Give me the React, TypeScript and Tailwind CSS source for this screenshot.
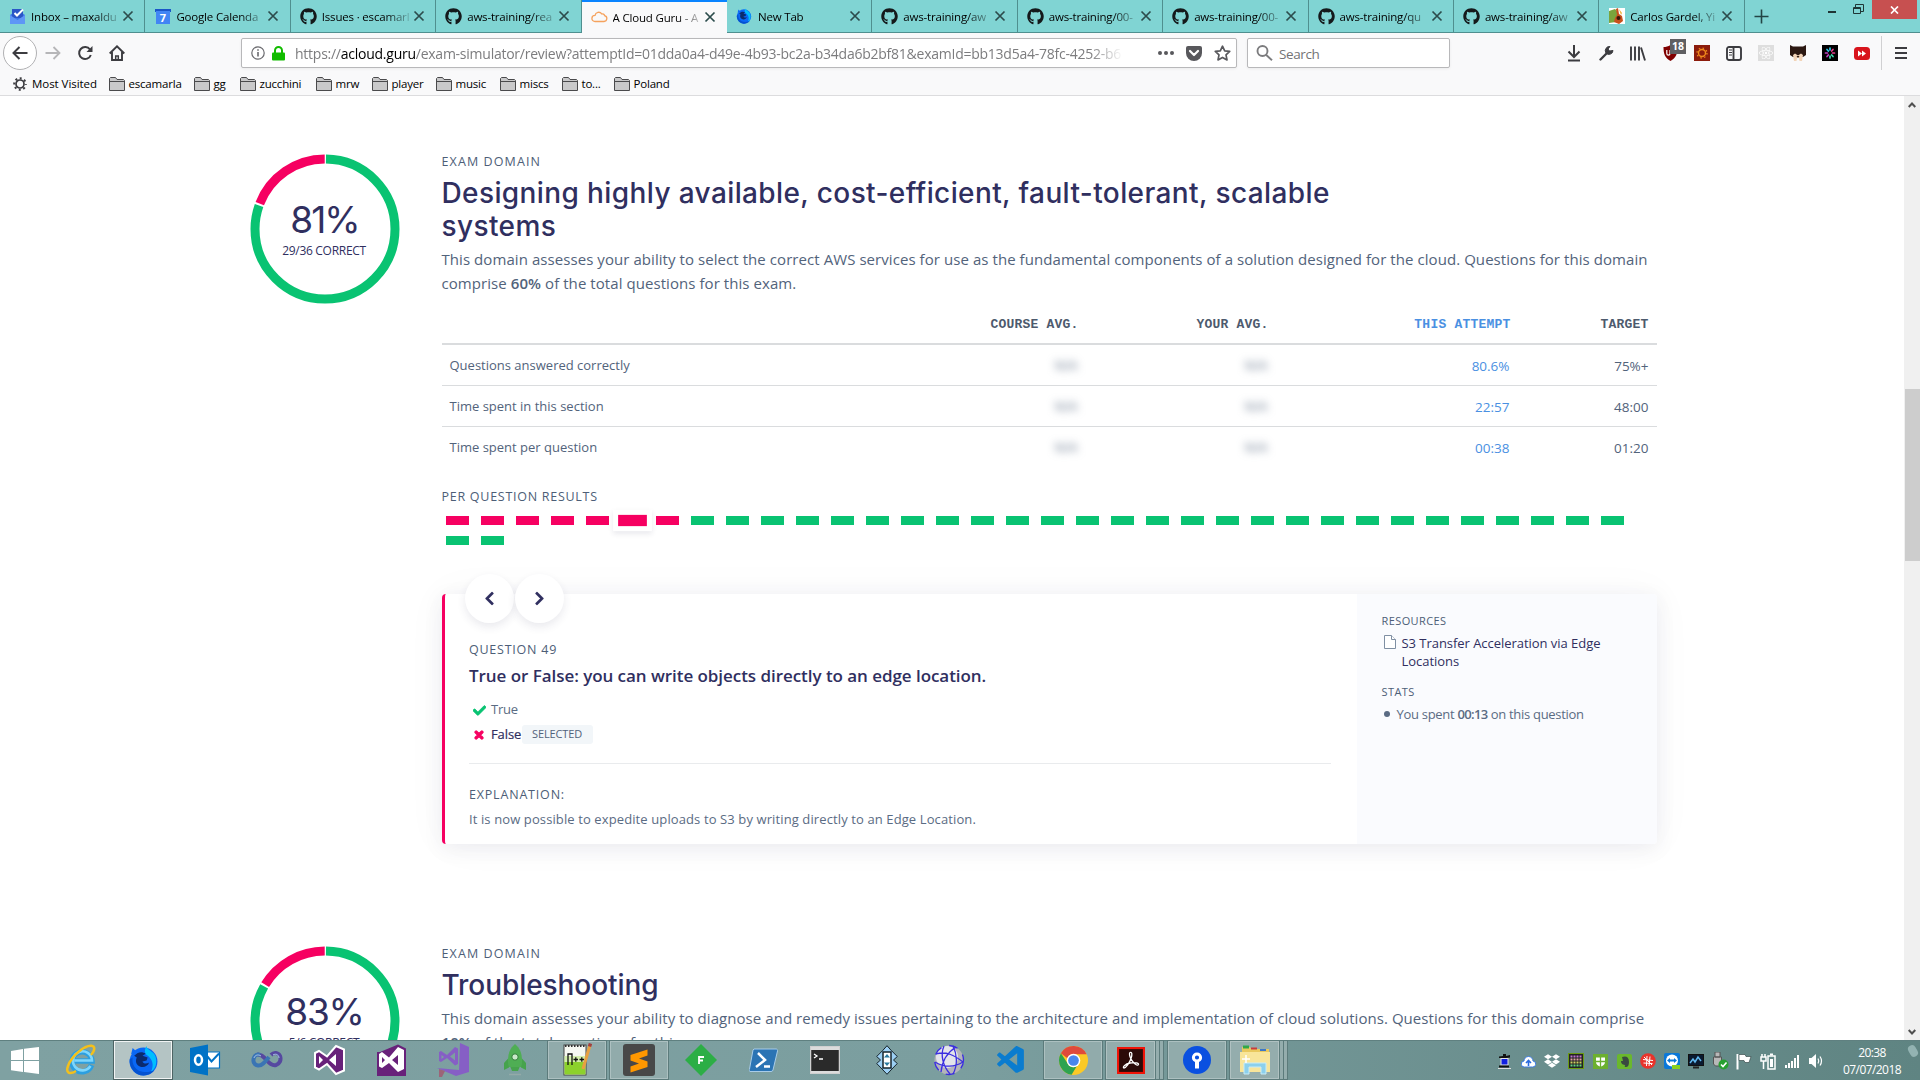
import React from "react";
import { FaGithub, FaDropbox, FaCheck, FaTimes, FaChevronLeft, FaChevronRight, FaReact } from "react-icons/fa";
import { VscVscode } from "react-icons/vsc";

/* ---------- browser chrome icons ---------- */

const InboxIcon = () => (
  <svg width="17" height="17" viewBox="0 0 17 17">
    <path d="M1 7l7.500-5L16 7v9H1z" fill="#3b78e7" />
    <path d="M3 1h11v9H3z" fill="#2a56c6" />
    <path d="M1 7l7.500 5L16 7v9H1z" fill="#5e97f6" />
    <path d="M5.500 5l2.500 2.500L14 1.500" stroke="#fff" strokeWidth="2" fill="none" />
  </svg>
);

const CalendarIcon = () => (
  <svg width="16" height="17" viewBox="0 0 16 17">
    <rect x="0" y="1" width="16" height="3" fill="#1a56c8" />
    <rect x="1" y="3" width="14" height="13" fill="#4285f4" />
    <text x="8" y="13.500" fontSize="11" fontWeight="700" fill="#fff" textAnchor="middle" fontFamily="Open Sans, sans-serif">7</text>
  </svg>
);

const CloudIcon = () => (
  <svg width="17" height="16" viewBox="0 0 17 16" fill="none" stroke="#f5a25d" strokeWidth="1.300">
    <path d="M4 12.500h9a3 3 0 0 0 .6-5.900 2.300 2.300 0 0 0-2.900-1.700A3.700 3.700 0 0 0 4 6.300 3.100 3.100 0 0 0 4 12.500z" />
  </svg>
);

const FirefoxIcon = ({ size }: { size: number }) => (
  <svg width={size} height={size} viewBox="0 0 30 30">
    <circle cx="15" cy="16" r="13.500" fill="#0a68f5" />
    <path d="M18 1c0 4 7 5 8.500 10 2 6 .5 12-4.500 15.500C26 19 23 13 18.500 10 15.500 8 16 4 18 1z" fill="#00bfff" />
    <path d="M3 9L4.500 3l4 3.500L14 5z" fill="#0a68f5" />
    <path d="M9 8c3-1.500 6-1 8 .5l-3 2 5 1.500-1 3-4 1c1 2.500 4 2.500 6.500 1-1.500 4-6 5.500-9.500 3.500-3.500-2-4-5.500-2.500-8.500L6 10.500z" fill="#0b2b6e" />
    <path d="M1.600 14C1 22 7 29.500 15 29.500c4 0 8-1.500 10.500-5C18 28 9 26 6 20.500 4.500 18 4 15 4.500 12z" fill="#0452d0" />
  </svg>
);

const GuitarIcon = () => (
  <svg width="16" height="16" viewBox="0 0 16 16">
    <rect width="16" height="16" fill="#fff" />
    <path d="M0 3l6-2 3 3-2 10-7 1z" fill="#7aa43c" />
    <path d="M7 1l2-1 1 6 3 2 1 5-4 3-5-2 1-4 2-3z" fill="#c8501c" />
    <circle cx="9.500" cy="10" r="2" fill="#3a1808" />
    <path d="M10 1l3 4-1 2z" fill="#f0b030" />
  </svg>
);

const CloseX = () => (
  <svg width="12" height="12" viewBox="0 0 12 12" stroke="#2c4c4c" strokeWidth="1.700">
    <path d="M1.500 1.500l9 9M10.500 1.500l-9 9" />
  </svg>
);

const Github = () => <FaGithub size={17} color="#14191b" />;

type TabData = { label: string; icon: React.ReactNode; active?: boolean };

const tabs: TabData[] = [
  { label: "Inbox – maxaldu", icon: <InboxIcon /> },
  { label: "Google Calenda", icon: <CalendarIcon /> },
  { label: "Issues · escamarl", icon: <Github /> },
  { label: "aws-training/rea", icon: <Github /> },
  { label: "A Cloud Guru - A", icon: <CloudIcon />, active: true },
  { label: "New Tab", icon: <FirefoxIcon size={16} /> },
  { label: "aws-training/aw", icon: <Github /> },
  { label: "aws-training/00-", icon: <Github /> },
  { label: "aws-training/00-", icon: <Github /> },
  { label: "aws-training/qu", icon: <Github /> },
  { label: "aws-training/aw", icon: <Github /> },
  { label: "Carlos Gardel, Yi", icon: <GuitarIcon /> },
];

function TabStrip() {
  return (
    <div className="flex h-[33px] bg-[#80d4d3]">
      {tabs.map((t, i) => (
        <div
          key={i}
          className={
            t.active
              ? "flex w-[145.400px] shrink-0 items-center border-t-2 border-[#0a84ff] bg-[#f9f9fa] pl-[9px] pb-[1px]"
              : "flex w-[145.400px] shrink-0 items-center border-r border-b border-[#4f8f8f] pl-[9px]"
          }
        >
          <span className="flex w-[17px] shrink-0 justify-center">{t.icon}</span>
          <span className="ml-[5px] w-[88px] shrink-0 pt-[1px] text-[11.500px] leading-5 tracking-[-0.180px] whitespace-nowrap text-black [mask-image:linear-gradient(to_right,#000_72%,rgba(0,0,0,0.150)_100%)]">
            {t.label}
          </span>
          <span className="ml-[3px]">
            <CloseX />
          </span>
        </div>
      ))}
      <div className="flex flex-1 items-center border-b border-[#4f8f8f] pl-[9px]">
        <svg width="15" height="15" viewBox="0 0 15 15" stroke="#234545" strokeWidth="1.600">
          <path d="M7.500 0.500v14M0.500 7.500h14" />
        </svg>
      </div>
      <div className="flex items-start border-b border-[#4f8f8f] pr-[3px]">
        <span className="mt-[11px] mr-[17px] h-[2px] w-2 bg-[#1f3535]" />
        <svg className="mt-1 mr-2" width="11" height="11" viewBox="0 0 11 11" fill="none" stroke="#1f3535">
          <path d="M.5 3.500h7v6h-7zM.5 4.500h7M2.500 3V.5h8v7H8" />
        </svg>
        <span className="flex h-[19px] w-[45px] items-center justify-center bg-[#c75050]">
          <svg width="9" height="8" viewBox="0 0 9 8" stroke="#fff" strokeWidth="1.700">
            <path d="M1 .5l7 7M8 .5l-7 7" />
          </svg>
        </span>
      </div>
    </div>
  );
}

const ToolSlot = ({ children }: { children: React.ReactNode }) => (
  <span className="flex h-8 w-8 shrink-0 items-center justify-center">{children}</span>
);

function NavBar() {
  return (
    <div className="flex h-10 items-center pl-[3px]">
      <span className="flex h-[34px] w-[34px] shrink-0 items-center justify-center rounded-full border border-[#b1b1b3] bg-white">
        <svg width="16" height="14" viewBox="0 0 16 14" fill="none" stroke="#3c3c40" strokeWidth="2">
          <path d="M15.500 7H1.500M7.500 1l-6 6 6 6" />
        </svg>
      </span>
      <ToolSlot>
        <svg width="16" height="14" viewBox="0 0 16 14" fill="none" stroke="#b6b6b8" strokeWidth="1.800">
          <path d="M.5 7h14M8.500 1l6 6-6 6" />
        </svg>
      </ToolSlot>
      <ToolSlot>
        <svg width="16" height="16" viewBox="0 0 16 16" fill="none" stroke="#3c3c40" strokeWidth="2">
          <path d="M13.800 10A6 6 0 1 1 13 4.500" />
          <path d="M15.500 1v6H9.500z" fill="#3c3c40" stroke="none" />
        </svg>
      </ToolSlot>
      <ToolSlot>
        <svg width="16" height="16" viewBox="0 0 16 16" fill="none" stroke="#3c3c40" strokeWidth="1.900">
          <path d="M.7 8.500L8 1.300l7.300 7.200M3 7v8h10V7" />
          <path d="M6.700 15v-4h2.600v4" strokeWidth="1.500" />
        </svg>
      </ToolSlot>
      <div className="ml-[108px] flex h-[30px] w-[996px] shrink-0 items-center rounded-[2px] border border-[#b8b8ba] bg-white pl-[9px] shadow-[0_1px_3px_rgba(0,0,0,0.060)]">
        <svg width="14" height="14" viewBox="0 0 14 14" fill="none" stroke="#6a6a6e" strokeWidth="1.200">
          <circle cx="7" cy="7" r="6.200" />
          <path d="M7 6v4.500M7 3.300v1.500" strokeWidth="1.600" />
        </svg>
        <svg className="ml-[7px]" width="13" height="15" viewBox="0 0 13 15">
          <rect x="0" y="6.500" width="13" height="8" rx="1" fill="#12bc00" />
          <path d="M3 8V4.500a3.500 3.500 0 0 1 7 0V8" fill="none" stroke="#12bc00" strokeWidth="2" />
        </svg>
        <span className="ml-[10px] w-[828px] shrink-0 overflow-hidden pt-[1px] text-[14px] leading-7 tracking-[-0.249px] whitespace-nowrap text-[#7c7c7e] [mask-image:linear-gradient(to_right,#000_96%,transparent_100%)]">
          https://<span className="text-black">acloud.guru</span>/exam-simulator/review?attemptId=01dda0a4-d49e-4b93-bc2a-b34da6b2bf81&amp;examId=bb13d5a4-78fc-4252-b6
        </span>
        <svg className="ml-[35px]" width="16" height="4" viewBox="0 0 16 4" fill="#58585c">
          <circle cx="2" cy="2" r="2" />
          <circle cx="8" cy="2" r="2" />
          <circle cx="14" cy="2" r="2" />
        </svg>
        <svg className="ml-[12px]" width="16" height="15" viewBox="0 0 16 15">
          <path d="M2 0h12a2 2 0 0 1 2 2v5a8 8 0 0 1-16 0V2a2 2 0 0 1 2-2z" fill="#58585c" />
          <path d="M4 5l4 4 4-4" fill="none" stroke="#fff" strokeWidth="2.200" strokeLinecap="round" strokeLinejoin="round" />
        </svg>
        <svg className="ml-[12px]" width="17" height="16" viewBox="0 0 17 16" fill="none" stroke="#58585c" strokeWidth="1.700" strokeLinejoin="round">
          <path d="M8.500 1.200l2.200 4.600 5 .6-3.700 3.500 1 5-4.500-2.500L4 14.900l1-5L1.300 6.400l5-.6z" />
        </svg>
      </div>
      <div className="ml-[10px] flex h-[30px] w-[203px] shrink-0 items-center rounded-[2px] border border-[#b8b8ba] bg-white pl-[8px] shadow-[0_1px_3px_rgba(0,0,0,0.060)]">
        <svg width="17" height="16" viewBox="0 0 17 16" fill="none" stroke="#7c7c7e" strokeWidth="1.900">
          <circle cx="6.500" cy="6" r="5" />
          <path d="M10 9.800l6 5.500" />
        </svg>
        <span className="ml-[6px] pt-[1px] text-[13.500px] leading-7 tracking-[-0.400px] text-[#737375]">Search</span>
      </div>
      <div className="ml-[108px] flex shrink-0 items-center">
        <ToolSlot>
          <svg width="14" height="17" viewBox="0 0 14 17" fill="none" stroke="#3c3c40" strokeWidth="2">
            <path d="M7 0v11M1.500 6.500L7 12l5.500-5.500M1 15.500h12" />
          </svg>
        </ToolSlot>
        <ToolSlot>
          <svg width="15" height="15" viewBox="0 0 15 15">
            <path d="M1.500 13.500l7-7" stroke="#3c3c40" strokeWidth="2.400" strokeLinecap="round" />
            <path d="M14 4.500A4 4 0 0 1 7 7 4.200 4.200 0 0 1 11 .5L9 3l1.500 2L14 4.500z" fill="#3c3c40" stroke="#3c3c40" />
          </svg>
        </ToolSlot>
        <ToolSlot>
          <svg width="16" height="15" viewBox="0 0 16 15" stroke="#3c3c40" strokeWidth="1.900">
            <path d="M1 .5v14M5 .5v14M9 .5v14M11 1.500l4 13" />
          </svg>
        </ToolSlot>
        <span className="relative flex h-8 w-8 items-center justify-center">
          <svg className="mr-0" width="15" height="16" viewBox="0 0 15 16">
            <path d="M7.500 0C10 1.500 12 2 14.500 2c0 7-1.500 11-7 14C2 13 .5 9 .5 2 3 2 5 1.500 7.500 0z" fill="#800000" />
            <path d="M3.800 5v3.500a1.500 1.500 0 0 0 3.200 0V5" stroke="#fff" strokeWidth="1.200" fill="none" />
          </svg>
          <span className="absolute top-[2px] left-[16px] flex h-[15px] w-[16px] items-center justify-center bg-[#5f5f62] text-[10.500px] leading-none font-bold text-white">18</span>
        </span>
        <ToolSlot>
          <svg width="16" height="16" viewBox="0 0 16 16">
            <rect width="16" height="16" fill="#8c1c0c" />
            <circle cx="8" cy="8" r="3.500" fill="none" stroke="#f08a1c" strokeWidth="1.400" />
            <circle cx="8" cy="8" r="5" fill="none" stroke="#f08a1c" strokeWidth="1.300" strokeDasharray="1.500 2.427" />
          </svg>
        </ToolSlot>
        <ToolSlot>
          <svg width="16" height="15" viewBox="0 0 16 15" fill="none" stroke="#3c3c40" strokeWidth="1.900">
            <rect x="1" y="1" width="14" height="13" rx="2" />
            <path d="M7.500 1v13" />
            <path d="M3 4h3M3 6.500h3M3 9h3" strokeWidth="1" />
          </svg>
        </ToolSlot>
        <ToolSlot>
          <span className="flex h-4 w-4 items-center justify-center bg-[#dedede]">
            <FaReact size={14} color="#ffffff" />
          </span>
        </ToolSlot>
        <ToolSlot>
          <svg width="16" height="16" viewBox="0 0 16 16">
            <path d="M0 0l3 1.500h10L16 0v10l-3 2H3l-3-2z" fill="#2c1812" />
            <path d="M3 10l2-1.500 3 2 3-2 2 1.500-1 6H9.500l-.5-3H7l-.5 3H4z" fill="#f2d4b8" />
            <path d="M6.500 11h3l-1.500 2z" fill="#2c1812" />
          </svg>
        </ToolSlot>
        <ToolSlot>
          <svg width="16" height="16" viewBox="0 0 16 16">
            <rect width="16" height="16" fill="#000" />
            <g strokeWidth="1.700" strokeLinecap="round">
              <path d="M8 3v2M5 4.500l1.300 1.500" stroke="#30c8e8" />
              <path d="M11 4.500l-1.300 1.500M12.500 8h-2" stroke="#e83e8c" />
              <path d="M11 11.500l-1.300-1.500M8 13v-2" stroke="#40d8b0" />
              <path d="M5 11.500l1.300-1.500M3.500 8h2" stroke="#c040c0" />
            </g>
          </svg>
        </ToolSlot>
        <ToolSlot>
          <svg width="16" height="13" viewBox="0 0 16 13">
            <rect width="16" height="13" rx="3.500" fill="#d8141c" />
            <path d="M4 3.500l4 3-4 3zM8 3.500l4 3-4 3z" fill="#fff" />
          </svg>
        </ToolSlot>
      </div>
      <span className="ml-[3px] h-[34px] w-px bg-[#d0d0d2]" />
      <svg className="ml-[13px]" width="12" height="12" viewBox="0 0 12 12" stroke="#3c3c40" strokeWidth="2">
        <path d="M0 1h12M0 6h12M0 11h12" />
      </svg>
    </div>
  );
}

const bookmarks = [
  { label: "escamarla", cls: "w-[85px]" },
  { label: "gg", cls: "w-[46px]" },
  { label: "zucchini", cls: "w-[76px]" },
  { label: "mrw", cls: "w-[56px]" },
  { label: "player", cls: "w-[64px]" },
  { label: "music", cls: "w-[64px]" },
  { label: "miscs", cls: "w-[62px]" },
  { label: "to...", cls: "w-[52px]" },
  { label: "Poland", cls: "w-[70px]" },
];

const FolderIcon = () => (
  <svg className="shrink-0" width="16" height="14" viewBox="0 0 16 14" stroke="#4a4a4c" fill="#c9c9ca">
    <path d="M.5 13.500v-12l1-1h5l1.500 2h6.500l1 1v10z" />
    <path d="M.5 4.500h15" />
  </svg>
);

function BookmarkBar() {
  return (
    <div className="flex h-[23px] items-center border-b border-[#dcdcde] text-[11.500px] leading-[22px] tracking-[-0.200px] whitespace-nowrap text-black">
      <span className="flex w-[108.500px] items-center pl-[13px]">
        <svg width="14" height="14" viewBox="0 0 14 14" fill="none" stroke="#3c3c40">
          <circle cx="7" cy="7" r="4" strokeWidth="1.700" />
          <circle cx="7" cy="7" r="5.800" strokeWidth="2" strokeDasharray="2 2.555" strokeDashoffset="1" />
        </svg>
        <span className="ml-[5px] tracking-[-0.050px]">Most Visited</span>
      </span>
      {bookmarks.map((b) => (
        <span key={b.label} className={"flex shrink-0 items-center gap-1 " + b.cls}>
          <FolderIcon />
          {b.label}
        </span>
      ))}
    </div>
  );
}

/* ---------- page ---------- */

function Donut({ fraction, percent, detail, pctClass }: { fraction: number; percent: string; detail: string; pctClass: string }) {
  const c = 2 * Math.PI * 70;
  const gap = 2;
  return (
    <div className="relative mt-[2px] h-[150px] w-[150px] shrink-0">
      <svg width="150" height="150" viewBox="0 0 150 150" fill="none" strokeWidth="9">
        <g transform="rotate(-90 75 75)">
          <circle cx="75" cy="75" r="70" stroke="#09c372" strokeDasharray={`${c * fraction - gap} ${c}`} strokeDashoffset={-gap / 2} />
          <circle cx="75" cy="75" r="70" stroke="#f60061" strokeDasharray={`${c * (1 - fraction) - gap} ${c}`} strokeDashoffset={-(c * fraction + gap / 2)} />
        </g>
      </svg>
      <div className="absolute inset-0 flex flex-col items-center pt-[46px] whitespace-nowrap text-[#302f5f]">
        <span className={"font-['Inter'] text-[37px] leading-[40px] " + pctClass}>{percent}</span>
        <span className="mt-[1px] mr-[1px] text-[12px] leading-[20px] tracking-[-0.290px]">{detail}</span>
      </div>
    </div>
  );
}

const Label = ({ children, cls }: { children: React.ReactNode; cls: string }) => (
  <div className={"text-[12.500px] leading-5 font-medium whitespace-nowrap text-[#4d5e77] " + cls}>{children}</div>
);

const rows = [
  ["Questions answered correctly", "80.6%", "75%+"],
  ["Time spent in this section", "22:57", "48:00"],
  ["Time spent per question", "00:38", "01:20"],
];

const Blurred = () => <span className="text-[13px] text-[#5a6b83] blur-[4px]">N/A</span>;

function StatsTable() {
  const cols = "grid grid-cols-[432px_212px_190px_240px_141px] text-right pr-0";
  return (
    <div className="mt-[9px] w-[1215px]">
      <div className={cols + " h-[41px] items-center border-b-2 border-[#dadcde] pt-[2px] font-['Liberation_Mono'] text-[13px] font-bold tracking-[0.210px] text-[#4d5a6d]"}>
        <span />
        <span className="pr-[7px]">COURSE AVG.</span>
        <span className="pr-[7px]">YOUR AVG.</span>
        <span className="pr-[5px] text-[#4a90e2]">THIS ATTEMPT</span>
        <span className="pr-[8px]">TARGET</span>
      </div>
      {rows.map((r, i) => (
        <div
          key={i}
          className={cols + (i < 2 ? " h-[41px] items-center border-b border-[#dadcde] pt-[2px] text-[13px] text-[#52637b]" : " h-[40px] items-center pt-[2px] text-[13px] text-[#52637b]")}
        >
          <span className="pl-[8px] text-left whitespace-nowrap">{r[0]}</span>
          <span className="pr-[8px]"><Blurred /></span>
          <span className="pr-[8px]"><Blurred /></span>
          <span className="pr-[6px] text-[13.500px] text-[#4a90e2]">{r[1]}</span>
          <span className="pr-[8px] text-[13.500px]">{r[2]}</span>
        </div>
      ))}
    </div>
  );
}

function QuestionBars() {
  return (
    <div className="mt-[5px] flex w-[1215px] flex-wrap gap-x-1 gap-y-[3px]">
      {Array.from({ length: 36 }, (_, i) => {
        const color = i < 7 ? "bg-[#f60061]" : "bg-[#09c372]";
        const box = i === 5 ? "scale-125 bg-white shadow-[0_2px_4px_rgba(50,50,93,0.100)]" : "";
        return (
          <span key={i} className={"h-[17px] w-[31px] p-1 " + box}>
            <span className={"block h-[9px] w-[23px] " + color} />
          </span>
        );
      })}
    </div>
  );
}

const RoundButton = ({ children }: { children: React.ReactNode }) => (
  <span className="flex h-[49px] w-[49px] items-center justify-center rounded-full bg-white text-[#302f5f] shadow-[0_4px_9px_rgba(50,50,93,0.100)]">{children}</span>
);

function QuestionCard() {
  return (
    <div className="relative mt-[45px] flex h-[250px] w-[1215px] rounded-[4px] border-l-[3px] border-[#f60061] bg-white shadow-[0_4px_20px_rgba(50,50,93,0.080),0_0_45px_rgba(50,50,93,0.035)]">
      <div className="absolute -top-[20px] left-[20px] flex gap-[1px]">
        <RoundButton><FaChevronLeft size={15} stroke="#302f5f" strokeWidth={20} /></RoundButton>
        <RoundButton><FaChevronRight size={15} stroke="#302f5f" strokeWidth={20} /></RoundButton>
      </div>
      <div className="flex-1 pt-[46px] pl-[24.500px]">
        <Label cls="tracking-[0.760px]">QUESTION 49</Label>
        <div className="mt-[4px] text-[17px] leading-6 font-semibold tracking-[-0.050px] text-[#302f5f]">
          True or False: you can write objects directly to an edge location.
        </div>
        <div className="mt-[10px] flex h-6 items-center text-[13px] tracking-[-0.200px] text-[#5a6b83]">
          <FaCheck className="ml-[4px]" size={13} color="#09c372" stroke="#09c372" strokeWidth={30} />
          <span className="ml-[5px]">True</span>
        </div>
        <div className="flex h-[25px] items-center text-[13px] text-[#302f5f]">
          <FaTimes className="ml-[4px]" size={12} color="#f60061" stroke="#f60061" strokeWidth={50} />
          <span className="ml-[6px] w-[31px] font-medium tracking-[-0.100px] [-webkit-text-stroke:0.200px_#302f5f]">False</span>
          <span className="flex h-[19px] w-[71px] items-center rounded-[3px] bg-[#f2f6f9] pl-[10px] text-[11px] tracking-[-0.130px] text-[#52637b]">SELECTED</span>
        </div>
        <div className="mt-[16px] w-[862px] border-b border-[#e9ebed]" />
        <Label cls="mt-[21px] tracking-[0.810px]">EXPLANATION:</Label>
        <div className="mt-[4px] text-[13px] leading-5 tracking-[0.110px] text-[#5a6b83]">
          It is now possible to expedite uploads to S3 by writing directly to an Edge Location.
        </div>
      </div>
      <div className="w-[300px] rounded-r-[4px] bg-[#fafbfe] pt-[17px] pl-[25px]">
        <div className="text-[11px] leading-5 font-medium tracking-[0.400px] text-[#4d5e77]">RESOURCES</div>
        <div className="flex pt-[3px]">
          <svg className="mt-[1px] ml-[2px] shrink-0" width="12" height="14" viewBox="0 0 12 14" fill="#fff" stroke="#7f8fa3">
            <path d="M.5.500h7l4 4v9H.5z" />
            <path d="M7.500.500v4h4" />
          </svg>
          <div className="ml-[6px] text-[13px] leading-[18px] font-medium tracking-[-0.040px] whitespace-nowrap text-[#302f5f]">
            S3 Transfer Acceleration via Edge
            <br />
            Locations
          </div>
        </div>
        <div className="mt-[12px] text-[11px] leading-5 font-medium tracking-[0.400px] text-[#4d5e77]">STATS</div>
        <div className="mt-[2px] flex items-center text-[13px] leading-5 tracking-[-0.300px] whitespace-nowrap text-[#5a6b83]">
          <span className="ml-[2px] h-[6px] w-[6px] rounded-full bg-[#5a6b83]" />
          <span className="ml-[7px]">
            You spent <b className="font-semibold tracking-[-0.600px]">00:13</b> on this question
          </span>
        </div>
      </div>
    </div>
  );
}

const Heading = ({ children, cls }: { children: React.ReactNode; cls: string }) => (
  <h2 className={"mt-[5px] font-['Inter'] text-[28px] leading-[33px] font-medium whitespace-nowrap text-[#302f5f] " + cls}>{children}</h2>
);

function Page() {
  return (
    <div className="flex min-h-0 flex-1 bg-white">
      <div className="min-w-0 flex-1 overflow-hidden pt-[56px] pl-[249.500px]">
        <section className="flex">
          <Donut fraction={29 / 36} percent="81%" detail="29/36 CORRECT" pctClass="tracking-[-2px]" />
          <div className="ml-[42px]">
            <Label cls="tracking-[1.110px]">EXAM DOMAIN</Label>
            <Heading cls="tracking-[0.390px]">
              Designing highly available, cost-efficient, fault-tolerant, scalable
              <br />
              systems
            </Heading>
            <p className="mt-[4px] text-[15px] leading-6 tracking-[0.066px] whitespace-nowrap text-[#52637b]">
              This domain assesses your ability to select the correct AWS services for use as the fundamental components of a solution designed for the cloud. Questions for this domain
              <br />
              comprise <b className="font-semibold">60%</b> of the total questions for this exam.
            </p>
            <StatsTable />
            <Label cls="mt-[20px] tracking-[0.730px]">PER QUESTION RESULTS</Label>
            <QuestionBars />
            <QuestionCard />
          </div>
        </section>
        <section className="mt-[100px] flex">
          <Donut fraction={5 / 6} percent="83%" detail="5/6 CORRECT" pctClass="tracking-[-1.200px]" />
          <div className="ml-[42px]">
            <Label cls="tracking-[1.110px]">EXAM DOMAIN</Label>
            <Heading cls="tracking-[-0.070px]">Troubleshooting</Heading>
            <p className="mt-[4px] text-[15px] leading-6 tracking-[0.055px] whitespace-nowrap text-[#52637b]">
              This domain assesses your ability to diagnose and remedy issues pertaining to the architecture and implementation of cloud solutions. Questions for this domain comprise
              <br />
              <b className="font-semibold">10%</b> of the total questions for this exam.
            </p>
          </div>
        </section>
      </div>
      <div className="flex w-4 shrink-0 flex-col items-center bg-[#f0f0f0]">
        <svg className="mt-[6px]" width="8" height="6" viewBox="0 0 8 6" fill="none" stroke="#505050" strokeWidth="2">
          <path d="M.7 5L4 1.500 7.300 5" />
        </svg>
        <div className="mt-[281px] h-[172px] w-[15px] bg-[#cdcdcd]" />
        <div className="flex-1" />
        <svg className="mb-[5px]" width="8" height="6" viewBox="0 0 8 6" fill="none" stroke="#505050" strokeWidth="2">
          <path d="M.7 1L4 4.500 7.300 1" />
        </svg>
      </div>
    </div>
  );
}

/* ---------- taskbar ---------- */

const WindowsLogo = () => (
  <svg width="28" height="27" viewBox="0 0 28 27" fill="#fff">
    <path d="M0 4l12-2v11H0zM13 1.800L28 0v13H13zM0 14h12v11L0 23.300zM13 14h15v13l-15-2z" />
  </svg>
);

const IeLogo = () => (
  <svg width="32" height="32" viewBox="0 0 32 32" fill="none">
    <path d="M26.500 21A10 10 0 1 1 27 17H9.500" stroke="#2c9fe0" strokeWidth="5.500" />
    <path d="M25.500 22A9.500 9.500 0 1 1 27 16.500H9.500" stroke="#7fd6fb" strokeWidth="2.600" />
    <path d="M26 11C30.500 6 30 2 26.500 1.700 20 1 7 11 3 22c-2.500 7 1.500 9 8 5" stroke="#f3c01c" strokeWidth="2.500" />
  </svg>
);

const OutlookLogo = () => (
  <svg width="32" height="32" viewBox="0 0 32 32">
    <path d="M15 8h15.500v16H15z" fill="#fff" stroke="#0072c6" strokeWidth="1.200" />
    <path d="M18 12l4.500 5.500L30 9.500" stroke="#0072c6" strokeWidth="2" fill="none" />
    <path d="M1 4l18-3.500v31L1 28z" fill="#0072c6" />
    <ellipse cx="9.500" cy="16" rx="3.500" ry="4.700" fill="none" stroke="#fff" strokeWidth="2.500" />
  </svg>
);

const InfinityLogo = () => (
  <svg width="32" height="20" viewBox="0 0 32 20" fill="none">
    <path d="M20 5c3-3 7-2.500 9 1 1.500 4-.5 8-4 9-4 1-7-2-9.500-5C13 7 10 4 6.500 4.500" stroke="#5648a0" strokeWidth="4" />
    <path d="M18 7c-4 5-7 9-11 8.500-4-.5-5.500-4.500-4-8 1-2.500 3.500-3.500 6-2.500" stroke="#3a74b4" strokeWidth="4" />
    <path d="M3 8c1-3 4-4 7-2M22 5c3-2 6 0 6 3" stroke="#a8c4e8" strokeWidth="1" />
  </svg>
);

const VsLogo = ({ boxed }: { boxed?: boolean }) =>
  boxed ? (
    <svg width="31" height="32" viewBox="0 0 31 32">
      <path d="M1 8h3L22 .5l8 4V32H1z" fill="#68217a" />
      <path d="M3 10l3-2 7 5.500L22 3l6 3v19l-6 3-9-9-7 5-3-1.500zM6 13v6l3-3zM22 11l-6 5 6 5z" fill="#fff" fillRule="evenodd" />
    </svg>
  ) : (
    <svg width="33" height="32" viewBox="0 0 33 32">
      <path d="M2 9l4-2 8 5.500L23 2l8 3.500v21L23 30l-9-10-8 5.500-4-2z" fill="#68217a" stroke="#fff" strokeWidth="2" />
      <path d="M6 12v8l4-4zM23 10l-7 6 7 6z" fill="#fff" />
    </svg>
  );

const VsInstaller = () => (
  <svg width="34" height="34" viewBox="0 0 34 34" fill="#865fc5">
    <path d="M24 0l9 4v25l-13 4L1 25l22 2z" />
    <path d="M3 9l2-1 6 4 8-8 3 1.500V21l-3 1.500L11 15l-6 4-2-1zm2.500 3v4l2.500-2zM19 9.500L14 13.500l5 4z" fillRule="evenodd" />
    <path d="M3 26l6 2-3 6H3z" fill="#9c6478" />
  </svg>
);

const Rocket = () => (
  <svg width="24" height="32" viewBox="0 0 24 32">
    <path d="M5.500 14L1 19v7l5-2.500zM18.500 14l4.500 5v7l-5-2.500zM7 22h10l-2 5H9z" fill="#46a34c" />
    <path d="M12 0c7 6 8 14 6 23H6C4 14 5 6 12 0z" fill="#4fae54" />
    <circle cx="12" cy="13" r="3.200" fill="#c9e8c9" stroke="#2f7d36" />
    <path d="M6 30.500h12" stroke="#93aaa8" strokeWidth="1.500" />
  </svg>
);

const NotepadPlus = () => (
  <svg width="30" height="34" viewBox="0 0 30 34">
    <rect x="2" y="2" width="22" height="30" fill="#f6f8f2" stroke="#444" />
    <rect x="2.500" y="17" width="21" height="14.500" fill="#8cd12c" />
    <rect x="2.500" y="13" width="21" height="6" fill="#d4efac" />
    <path d="M3 3h21" stroke="#333" strokeWidth="2" strokeDasharray="1.500 1.500" />
    <path d="M6 22V11h4v11M11.500 16.500h4.500M13.800 14.200v4.600M17.500 16.500H22M19.800 14.200v4.600" stroke="#111" strokeWidth="1.300" fill="none" />
    <path d="M28 2l-7 24" stroke="#e8a040" strokeWidth="3" />
    <path d="M28.500 0.500l-1 3" stroke="#a04040" strokeWidth="3.500" />
  </svg>
);

const Sublime = () => (
  <svg width="32" height="32" viewBox="0 0 32 32">
    <rect width="32" height="32" rx="3" fill="#484848" />
    <path d="M7.500 11L24.500 5.500v6L16 14.500l8.500 3V23l-17 5.500v-6l8.500-3-8.500-3z" fill="#ff9800" />
  </svg>
);

const Diamond = () => (
  <svg width="32" height="32" viewBox="0 0 32 32">
    <path d="M16 0l16 16-16 16L0 16z" fill="#2cae46" />
    <path d="M14 20v-7h5M14 16.500h4" stroke="#fff" strokeWidth="1.800" fill="none" />
  </svg>
);

const PowerShell = () => (
  <svg width="29" height="24" viewBox="0 0 29 24">
    <path d="M5 1h22a1.500 1.500 0 0 1 1.500 2L24 22a2 2 0 0 1-2 1.500H2A1.500 1.500 0 0 1 .5 21L4 2z" fill="#2b74b4" stroke="#a8cce8" />
    <path d="M9 5l7 7-9 7M15 18.500h6" stroke="#fff" strokeWidth="2.500" fill="none" />
  </svg>
);

const Cmd = () => (
  <svg width="30" height="28" viewBox="0 0 30 28">
    <rect x=".5" y=".5" width="29" height="27" fill="#2a2a2a" stroke="#d0d0d0" strokeWidth="1.500" />
    <path d="M1 1h28v3H1zM1 25h28v2H1z" fill="#dcdcdc" />
    <path d="M4 8l3 2-3 2M9 13h4" stroke="#fff" strokeWidth="1.300" fill="none" />
  </svg>
);

const UpDown = () => (
  <svg width="22" height="30" viewBox="0 0 22 30" stroke="#16242c">
    <path d="M11 .7l4 4.500 6.300 6.300L17.500 15l3.800 3.500L15 25l-4 4.300L7 25 .7 18.500 4.500 15 .7 11.500 7 5.200z" fill="#9dd0f4" />
    <rect x="7" y="7" width="8" height="16" fill="#fff" strokeWidth="1.500" />
    <path d="M11 9l3 3.500H8zM11 21l3-3.500H8z" fill="#2a7aa0" stroke="none" />
  </svg>
);

const NetBall = () => (
  <svg width="32" height="32" viewBox="0 0 32 32" fill="none">
    <circle cx="16" cy="16" r="14.500" fill="#b4b4ba" />
    <circle cx="14" cy="13" r="11" fill="#e4e4ea" />
    <g stroke="#3a2ee0" strokeWidth="1.300">
      <circle cx="16" cy="16" r="14.500" strokeDasharray="9 8" />
      <path d="M3 10c10-3 18 1 27 8M2 18c9 6 20 5 28 0M11 2c-4 9-1 20 6 28M23 3C15 8 9 17 8 28M20 2c4 8 5 19 0 28" />
    </g>
  </svg>
);

const Chrome = () => (
  <svg width="31" height="31" viewBox="0 0 32 32">
    <circle cx="16" cy="16" r="15" fill="#fbc926" />
    <path d="M3 8.500A15 15 0 0 1 29.500 9.500H16a6.500 6.500 0 0 0-6 4.500z" fill="#df4a3c" />
    <path d="M3 8.500a15 15 0 0 0 11 22.300l5.500-9A6.500 6.500 0 0 1 10 19z" fill="#2ea350" />
    <circle cx="16" cy="16" r="7" fill="#fff" />
    <circle cx="16" cy="16" r="5.500" fill="#4a86ee" />
  </svg>
);

const Acrobat = () => (
  <svg width="28" height="27" viewBox="0 0 28 27">
    <rect x="1" y="1" width="26" height="25" fill="#2b0a08" stroke="#f01408" strokeWidth="2.200" />
    <path d="M13 5.500c2-1 2.500 2 1 6C12.500 16 9 21 7 21c-2-.5 1-4 6-5s9 0 8.500 1.500C20.500 19.500 16 16 14 12c-1.500-3-2-6-1-6.500z" fill="none" stroke="#fff" strokeWidth="1.300" />
  </svg>
);

const KeyLogo = () => (
  <svg width="28" height="28" viewBox="0 0 28 28">
    <circle cx="14" cy="14" r="14" fill="#0a50e0" />
    <circle cx="14" cy="11.500" r="3.600" fill="none" stroke="#fff" strokeWidth="3" />
    <path d="M14 14v8.500" stroke="#fff" strokeWidth="4" />
  </svg>
);

const Explorer = () => (
  <svg width="32" height="30" viewBox="0 0 32 30">
    <path d="M3 2h8l1 2h18v22H3z" fill="#e9c95e" />
    <path d="M4 .5h6v3H4z" fill="#30a848" />
    <path d="M12 2.500h6v2h-6z" fill="#c83c3c" />
    <path d="M21 4h6v2h-6z" fill="#3c78c8" />
    <path d="M1 7h30v20H1z" fill="#f8e59a" />
    <path d="M5 29V18h22v11h-5v-7H10v7z" fill="#8cd0ec" stroke="#c8ecf8" />
    <path d="M7 10v8M3 14h8" stroke="#fff" strokeWidth="1.500" />
  </svg>
);

type Slot = { icon: React.ReactNode; kind?: "open" | "focus" | "stack" };

const slots: Slot[] = [
  { icon: <IeLogo /> },
  { icon: <FirefoxIcon size={31} />, kind: "focus" },
  { icon: <OutlookLogo /> },
  { icon: <InfinityLogo /> },
  { icon: <VsLogo /> },
  { icon: <VsLogo boxed /> },
  { icon: <VsInstaller /> },
  { icon: <Rocket /> },
  { icon: <NotepadPlus />, kind: "open" },
  { icon: <Sublime />, kind: "open" },
  { icon: <Diamond /> },
  { icon: <PowerShell /> },
  { icon: <Cmd /> },
  { icon: <UpDown /> },
  { icon: <NetBall /> },
  { icon: <VscVscode size={33} color="#0a7ccf" /> },
  { icon: <Chrome />, kind: "open" },
  { icon: <Acrobat />, kind: "stack" },
  { icon: <KeyLogo />, kind: "open" },
  { icon: <Explorer />, kind: "stack" },
];

function TaskSlot({ slot }: { slot: Slot }) {
  if (slot.kind === "stack")
    return (
      <span className="flex h-10 w-[62px] shrink-0 pl-[1px]">
        <span className="flex h-10 w-[51px] items-center justify-center border border-[#5c7b7b] bg-[#94adad] shadow-[inset_0_0_0_1px_rgba(255,255,255,0.250)]">{slot.icon}</span>
        <span className="h-10 w-[4px] border-y border-r border-[#5c7b7b] bg-[#94adad]" />
        <span className="h-10 w-[4px] border-y border-r border-[#5c7b7b] bg-[#94adad]" />
      </span>
    );
  if (slot.kind)
    return (
      <span className="flex h-10 w-[62px] shrink-0 items-center justify-center">
        <span
          className={
            slot.kind === "focus"
              ? "flex h-10 w-[60px] items-center justify-center border border-[#4d6464] bg-[#b4c4c4] shadow-[inset_0_0_0_1px_rgba(255,255,255,0.800)]"
              : "flex h-10 w-[60px] items-center justify-center border border-[#5c7b7b] bg-[#91abab] shadow-[inset_0_0_0_1px_rgba(255,255,255,0.250)]"
          }
        >
          {slot.icon}
        </span>
      </span>
    );
  return <span className="flex h-10 w-[62px] shrink-0 items-center justify-center">{slot.icon}</span>;
}

const tray: React.ReactNode[] = [
  <svg width="15" height="16" viewBox="0 0 15 16"><path d="M2 5V3.500L6 3V1h3v2l4-1v2.500L9 5z" fill="#111" /><rect x="4" y="5.500" width="7" height="6.500" fill="#1020e0" stroke="#e4e4e4" /><path d="M2 13.500h10" stroke="#111" strokeWidth="2" /><path d="M1 15.500h13" stroke="#ddd" /></svg>,
  <svg width="15" height="13" viewBox="0 0 15 13"><path d="M3.500 12a3 3 0 0 1-.5-6A4.500 4.500 0 0 1 12 6a3 3 0 0 1-.5 6z" fill="#fff" stroke="#3c7be0" /><path d="M7.500 11V6M5 8l2.500-2.500L10 8" stroke="#2a6ae0" strokeWidth="1.600" fill="none" /></svg>,
  <FaDropbox size={16} color="#fff" />,
  <svg width="16" height="16" viewBox="0 0 16 16"><rect x=".5" y=".5" width="15" height="15" fill="#222" stroke="#6a9a10" /><path d="M2.500 3.500h11" stroke="#c070d0" strokeWidth="2" strokeDasharray="2 1" /><path d="M2.500 6.500h11" stroke="#e0a0a0" strokeWidth="2" strokeDasharray="2 1" /><path d="M2.500 9.500h11" stroke="#d0d060" strokeWidth="2" strokeDasharray="2 1" /><path d="M2.500 12.500h11" stroke="#60d080" strokeWidth="2" strokeDasharray="2 1" /></svg>,
  <svg width="15" height="15" viewBox="0 0 15 15"><rect width="15" height="15" fill="#6cb030" /><path d="M3 3.500h9V8c0 2.500-2 4-4.500 4.700C5 12 3 10.500 3 8z" fill="#fff" /><path d="M7.500 3v10M3 7.500h9" stroke="#6cb030" strokeWidth="1.300" /></svg>,
  <svg width="15" height="15" viewBox="0 0 15 15"><rect width="15" height="15" rx="2" fill="#6ab82c" /><path d="M5 3c4-1.500 7 0 7 5 0 3-1 5-3 5s-1.500-2 0-2c-3 0-5-1-5-4h2z" fill="#3a4a40" /></svg>,
  <svg width="16" height="16" viewBox="0 0 16 16"><circle cx="8" cy="8" r="7.800" fill="#e8342c" /><path d="M7 3l-.5 10M10 3.500L9 13M3 6.500l10 1M3.500 10l9 .5M4 4l8 8" stroke="#fff" strokeWidth="1" /></svg>,
  <svg width="16" height="16" viewBox="0 0 16 16"><rect width="16" height="16" rx="2" fill="#0a78d8" /><circle cx="8" cy="7.500" r="6" fill="#fff" /><path d="M3 7.500l3-2.500v1.500h4V5l3 2.500-3 2.500V8.500H6V10z" fill="#0a78d8" /><rect x="8" y="12" width="8" height="4" fill="#8ad020" /></svg>,
  <svg width="16" height="15" viewBox="0 0 16 15"><rect x=".5" y=".5" width="15" height="11" fill="#0a1a30" stroke="#111" /><path d="M2 9l3-4 2 3 3-5 3 4" stroke="#60b8f0" strokeWidth="1.500" fill="none" /><path d="M5 13.500h6" stroke="#222" strokeWidth="2" /></svg>,
  <svg width="17" height="18" viewBox="0 0 17 18"><path d="M3 0h5v5H3zM1.500 5h8v7l-2 2H3.500l-2-2z" fill="#b8b8b8" stroke="#555" /><circle cx="11.500" cy="12.500" r="5" fill="#28a030" /><path d="M9 12.500l2 2 3.500-4" stroke="#fff" strokeWidth="1.600" fill="none" /></svg>,
  <svg width="16" height="17" viewBox="0 0 16 17"><path d="M1.500 1v15.500" stroke="#fff" strokeWidth="2" /><path d="M3 1.500h6l1 2h5l-2 6H9l-1-2H3z" fill="#fff" stroke="#2a3c3c" strokeWidth=".6" /></svg>,
  <svg width="16" height="17" viewBox="0 0 16 17" fill="none" stroke="#fff"><path d="M1 4h5v4H1zM2 1v3M5 1v3M3.500 8v8" strokeWidth="1.500" /><rect x="8" y="3" width="7" height="13" strokeWidth="1.500" /><path d="M10 1.500h3" strokeWidth="2" /><path d="M10 6h3v8h-3z" fill="#fff" stroke="none" /></svg>,
  <svg width="16" height="14" viewBox="0 0 16 14" stroke="#fff" strokeWidth="2"><path d="M2 14v-3M5 14V9M8 14V7M11 14V4M14 14V1" /></svg>,
  <svg width="16" height="16" viewBox="0 0 16 16"><path d="M1 5h2.500L8 1v14l-4.500-4H1z" fill="#fff" /><path d="M10 5.500q1.500 2.500 0 5M12 3.500q3 4.500 0 9" stroke="#fff" fill="none" strokeWidth="1.200" /></svg>,
];

function Taskbar() {
  return (
    <div className="flex h-10 shrink-0 items-center bg-gradient-to-r from-[#7fa1a2] via-[#7b9e9f] to-[#5f8482] shadow-[inset_0_1px_0_#5f8080]">
      <span className="flex w-[50px] shrink-0 items-center justify-center">
        <WindowsLogo />
      </span>
      {slots.map((s, i) => (
        <TaskSlot key={i} slot={s} />
      ))}
      <div className="flex-1" />
      <div className="flex items-center pt-[2px]">
        {tray.map((t, i) => (
          <span key={i} className="flex w-6 items-center justify-center">
            {t}
          </span>
        ))}
      </div>
      <div className="relative mr-[4px] w-[88px] pt-[1px] text-center text-[12px] leading-[17px] tracking-[-0.570px] text-white">
        20:38
        <br />
        07/07/2018
        <span className="absolute top-[2px] right-[-1px] h-3 w-2 rotate-[-30deg] rounded-full bg-[#93b3b2]" />
      </div>
    </div>
  );
}

export default function App() {
  return (
    <div className="flex h-[1080px] w-[1920px] flex-col overflow-hidden bg-[#f9f9fa] font-['Open_Sans',sans-serif]">
      <TabStrip />
      <NavBar />
      <BookmarkBar />
      <Page />
      <Taskbar />
    </div>
  );
}
